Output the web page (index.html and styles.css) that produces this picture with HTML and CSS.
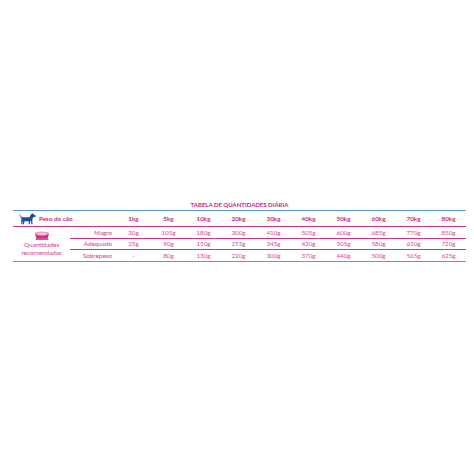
FILE: index.html
```html
<!DOCTYPE html>
<html lang="pt">
<head>
<meta charset="utf-8">
<title>Tabela de quantidades diária</title>
<link rel="stylesheet" href="styles.css">
</head>
<body>
<div class="page">
  <div class="title">TABELA DE QUANTIDADES DIÁRIA</div>
  <table class="qt">
    <colgroup>
      <col class="c-icon"><col class="c-label">
      <col class="c-val"><col class="c-val"><col class="c-val"><col class="c-val"><col class="c-val">
      <col class="c-val"><col class="c-val"><col class="c-val"><col class="c-val"><col class="c-val">
    </colgroup>
    <thead>
      <tr class="head">
        <th colspan="2" class="weight">
          <div class="weight-in">
            <svg class="dog" viewBox="0 0 17 12" width="17" height="12" aria-hidden="true">
              <path fill="#1d4f9e" d="M0.6 1.2 L2.2 3.6 L3.4 4.3 L10.4 4.3 L11.4 2.4 L12.2 1.1 L13.6 0.6 L14.8 1 L15.3 1.9 L16.6 2.4 L16.8 3.3 L15.8 4 L14.5 4.1 L13.6 5.4 L13.3 8 L13.6 11.3 L12.4 11.3 L12 8.4 L11.2 7.6 L10.8 11.3 L9.7 11.3 L9.7 8.2 L5.6 8.2 L4.9 11.3 L3.8 11.3 L4 8.3 L3.3 9.6 L3.4 11.3 L2.3 11.3 L2.2 8.4 L2.5 6.3 L1.9 4.4 L0.2 1.6 Z"/>
              <path fill="#1d4f9e" d="M13.4 1.1 L12.6 3.2 L13.3 4.3 L13.9 2 Z"/>
            </svg>
            <span>Peso do cão</span>
          </div>
        </th>
        <th>1kg</th><th>5kg</th><th>10kg</th><th>20kg</th><th>30kg</th>
        <th>40kg</th><th>50kg</th><th>60kg</th><th>70kg</th><th>80kg</th>
      </tr>
    </thead>
    <tbody>
      <tr class="row">
        <td rowspan="3" class="rec">
          <svg class="bowl" viewBox="0 0 16 9" width="16" height="9" aria-hidden="true">
            <path fill="#d6287f" d="M1 2.6 L15 2.6 L13.6 7.6 L2.4 7.6 Z"/>
            <ellipse cx="8" cy="2.6" rx="7" ry="2.1" fill="#ee8cbd"/>
            <ellipse cx="8" cy="2.8" rx="5.2" ry="1.3" fill="#f7c6de"/>
            <rect x="1.6" y="7.4" width="12.8" height="1.4" rx="0.6" fill="#b81f6d"/>
          </svg>
          <div class="rec-text">Quantidades<br>recomendadas</div>
        </td>
        <td class="label">Magro</td>
        <td>30g</td><td>105g</td><td>180g</td><td>300g</td><td>410g</td>
        <td>505g</td><td>600g</td><td>685g</td><td>770g</td><td>850g</td>
      </tr>
      <tr class="row">
        <td class="label">Adequado</td>
        <td>25g</td><td>90g</td><td>150g</td><td>255g</td><td>345g</td>
        <td>430g</td><td>505g</td><td>580g</td><td>650g</td><td>720g</td>
      </tr>
      <tr class="row last">
        <td class="label">Sobrepeso</td>
        <td>-</td><td>80g</td><td>130g</td><td>220g</td><td>300g</td>
        <td>370g</td><td>440g</td><td>500g</td><td>565g</td><td>625g</td>
      </tr>
    </tbody>
  </table>
</div>
</body>
</html>
```
FILE: styles.css
```css
html, body {
  margin: 0;
  padding: 0;
  background: #ffffff;
}

body {
  font-family: Lato, "Open Sans", "Liberation Sans", sans-serif;
  color: #d33a8a;
}

.page {
  width: 474px;
  height: 474px;
  padding: 201px 8px 0 13px;
  box-sizing: border-box;
}

.title {
  width: 453px;
  text-align: center;
  font-size: 6px;
  font-weight: 700;
  line-height: 8px;
  color: #c9287c;
}

.qt {
  width: 453px;
  border-collapse: collapse;
  table-layout: fixed;
  border-top: 1px solid #5b9bd8;
  border-bottom: 1px solid #5b9bd8;
  margin-top: 1px;
}

.c-icon { width: 57px; }
.c-label { width: 46px; }
.c-val { width: 35px; }

.qt th, .qt td {
  padding: 0;
  font-size: 6.3px;
  text-align: center;
  vertical-align: middle;
}

.head th {
  height: 15px;
  font-weight: 700;
  color: #c9287c;
  border-bottom: 1px solid #d8307f;
}

.weight-in {
  display: flex;
  align-items: center;
  gap: 3px;
  padding-left: 6px;
}

.dog {
  display: block;
  flex: none;
}

.row td {
  height: 10.5px;
  color: #d7489a;
  border-bottom: 1px solid #d8307f;
}

.row.last td {
  height: 11px;
  border-bottom: none;
}

.row td.label {
  text-align: right;
  padding-right: 4px;
  color: #d33a8a;
}

.row td.rec {
  border-bottom: none;
  padding-top: 4px;
  text-align: center;
  vertical-align: top;
  color: #d33a8a;
}

.bowl {
  display: block;
  margin: 0 auto 1px;
}

.rec-text {
  line-height: 8px;
  font-size: 6.3px;
}
```
